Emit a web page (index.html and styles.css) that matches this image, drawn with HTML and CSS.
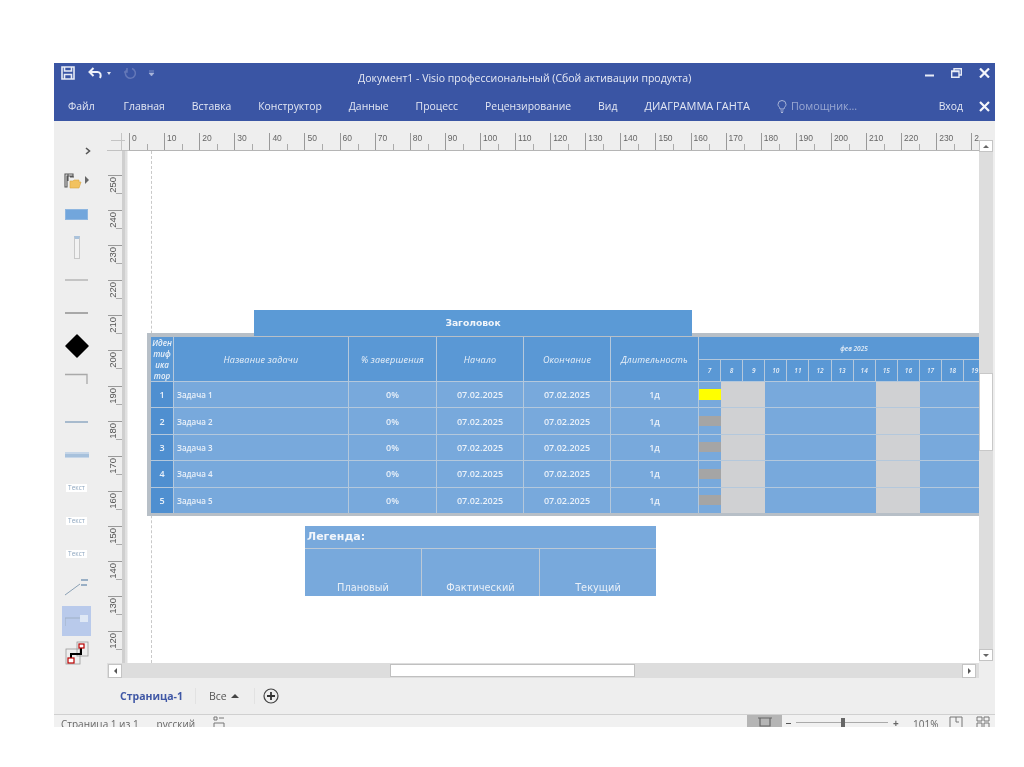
FILE: index.html
```html
<!DOCTYPE html>
<html lang="ru">
<head>
<meta charset="utf-8">
<title>Документ1 - Visio профессиональный</title>
<link rel="stylesheet" href="styles.css">
</head>
<body>
<div class="window">
  <header class="ribbon">
    <div class="titlebar">
      <div class="qat">
        <svg class="ic-save" width="14" height="14" viewBox="0 0 14 14"><path d="M1 1H13V13H1ZM3.5 1V5H10.5V1M3.5 13V8.5H10.5V13" fill="none" stroke="#e8ecf6" stroke-width="1.6"/></svg>
        <svg class="ic-undo" width="15" height="13" viewBox="0 0 15 13"><path d="M5.5 1L1.5 5L5.5 9M2 5H9.5C12.5 5 13.5 8 12 11" fill="none" stroke="#eef1f8" stroke-width="2"/></svg>
        <span class="tiny-caret"></span>
        <svg class="ic-redo" width="12" height="13" viewBox="0 0 12 13"><path d="M8 1.5A5 5 0 1 1 3 2.5M3 1V5H0" fill="none" stroke="#6478b8" stroke-width="1.5"/></svg>
        <svg class="ic-custom" width="7" height="7" viewBox="0 0 7 7"><path d="M1 1H6M1 3H6L3.5 6Z" fill="#aab6da" stroke="#aab6da" stroke-width=".6"/></svg>
      </div>
      <div class="doc-title">Документ1 - Visio профессиональный (Сбой активации продукта)</div>
      <div class="winctl">
        <svg width="9" height="9" viewBox="0 0 9 9"><path d="M0 6.5H9" stroke="#e8ecf6" stroke-width="2"/></svg>
        <svg width="11" height="10" viewBox="0 0 11 10"><path d="M.7 3H8V9.3H.7ZM3 3V.7H10.3V7H8M.7 3.5H8" fill="none" stroke="#e8ecf6" stroke-width="1.4"/></svg>
        <svg width="11" height="10" viewBox="0 0 11 10"><path d="M1 .5L10 9.5M10 .5L1 9.5" stroke="#f4f6fb" stroke-width="2.2"/></svg>
      </div>
    </div>
    <nav class="menu">
      <span>Файл</span>
      <span class="m-main">Главная</span>
      <span>Вставка</span>
      <span>Конструктор</span>
      <span>Данные</span>
      <span>Процесс</span>
      <span>Рецензирование</span>
      <span>Вид</span>
      <span class="m-gantt">ДИАГРАММА ГАНТА</span>
      <span class="helper">
        <svg width="10" height="13" viewBox="0 0 10 13"><path d="M3 9C3 7 1 6.500 1 4.500A4 4 0 0 1 9 4.500C9 6.500 7 7 7 9ZM3.500 11H6.500M4 12.500H6" fill="none" stroke="#a9b5d8" stroke-width="1"/></svg>
        Помощник...
      </span>
      <span class="login">Вход</span>
      <svg class="ribbon-x" width="11" height="11" viewBox="0 0 11 11"><path d="M1 1L10 10M10 1L1 10" stroke="#f4f6fb" stroke-width="2.2"/></svg>
    </nav>
  </header>

  <div class="workspace">
    <aside class="stencil">
      <div class="st st-chev"><svg width="6" height="8" viewBox="0 0 6 8"><path d="M1 1L4.500 4L1 7" fill="none" stroke="#555" stroke-width="1.6"/></svg></div>
      <div class="st st-folder">
        <svg width="26" height="16" viewBox="0 0 26 16"><path d="M1 1H9V3H3V14H1ZM4 1V8M6 4H10" fill="none" stroke="#555" stroke-width="1.1"/><path d="M6 15V8H9L10 7H15V9H17L15 15Z" fill="#f2c25f" stroke="#d9a441" stroke-width=".6"/><path d="M21 3L25 7L21 11Z" fill="#666"/></svg>
      </div>
      <div class="st"><span class="sh-rect"></span></div>
      <div class="st"><span class="sh-slim"></span></div>
      <div class="st"><span class="sh-line sh-line-light"></span></div>
      <div class="st"><span class="sh-line sh-line-dark"></span></div>
      <div class="st"><svg width="24" height="24" viewBox="0 0 24 24"><path d="M12 1L23 12L12 23L1 12Z" fill="#000" stroke="#000" stroke-linejoin="round" stroke-width="1.500"/></svg></div>
      <div class="st"><svg width="24" height="12" viewBox="0 0 24 12"><path d="M0 1.500H22V11" fill="none" stroke="#a9a9a9" stroke-width="1.300"/></svg></div>
      <div class="st st-gap"><span class="sh-line sh-line-blue"></span></div>
      <div class="st"><span class="sh-thick"></span></div>
      <div class="st"><span class="sh-text">Текст</span></div>
      <div class="st"><span class="sh-text">Текст</span></div>
      <div class="st"><span class="sh-text">Текст</span></div>
      <div class="st"><svg width="24" height="18" viewBox="0 0 24 18"><path d="M0 17L15 6" stroke="#8aa0b5" stroke-width="1"/><path d="M16 2H23M16 7H22" stroke="#7d9ab8" stroke-width="1.500"/></svg></div>
      <div class="st st-active"><svg width="24" height="12" viewBox="0 0 24 12"><path d="M0 11V3H15" fill="none" stroke="#9fb0c5" stroke-width="1"/><rect x="15" y="0" width="8" height="7" fill="#dfe8f5"/></svg></div>
      <div class="st st-conn"><svg width="24" height="24" viewBox="0 0 24 24"><rect x="1" y="8" width="14" height="15" fill="none" stroke="#999" stroke-width=".8"/><rect x="12" y="1" width="11" height="14" fill="none" stroke="#999" stroke-width=".8"/><path d="M6 18V13H16V6" fill="none" stroke="#000" stroke-width="2"/><rect x="14" y="3" width="5" height="4" fill="#fff" stroke="#b00" stroke-width="1.200"/><rect x="3" y="17" width="6" height="5" fill="#fff" stroke="#b00" stroke-width="1.200"/></svg></div>
    </aside>

    <div class="editor">
      <div class="corner"><span class="corner-v"></span><span class="corner-h"></span></div>
      <div class="hruler">
        <span>0</span><span>10</span><span>20</span><span>30</span><span>40</span><span>50</span><span>60</span><span>70</span><span>80</span><span>90</span><span>100</span><span>110</span><span>120</span><span>130</span><span>140</span><span>150</span><span>160</span><span>170</span><span>180</span><span>190</span><span>200</span><span>210</span><span>220</span><span>230</span><span>240</span>
      </div>
      <div class="vruler">
        <span class="vr-stub"></span>
        <span><b>250</b></span><span><b>240</b></span><span><b>230</b></span><span><b>220</b></span><span><b>210</b></span><span><b>200</b></span><span><b>190</b></span><span><b>180</b></span><span><b>170</b></span><span><b>160</b></span><span><b>150</b></span><span><b>140</b></span><span><b>130</b></span><span><b>120</b></span>
      </div>
      <div class="gutter"></div>
      <main class="canvas">
        <div class="guide"></div>

        <div class="gantt-title">Заголовок</div>

        <div class="gantt-frame">
          <div class="gantt">
            <div class="th th-id">Иден<br>тиф<br>ика<br>тор</div>
            <div class="th">Название задачи</div>
            <div class="th">% завершения</div>
            <div class="th">Начало</div>
            <div class="th">Окончание</div>
            <div class="th">Длительность</div>
            <div class="th-time">
              <div class="month">фев 2025</div>
              <div class="days"><span>7</span><span>8</span><span>9</span><span>10</span><span>11</span><span>12</span><span>13</span><span>14</span><span>15</span><span>16</span><span>17</span><span>18</span><span>19</span></div>
            </div>

            <div class="td td-id">1</div><div class="td td-name">Задача 1</div><div class="td">0%</div><div class="td">07.02.2025</div><div class="td">07.02.2025</div><div class="td">1д</div>
            <div class="track"><i class="slot"><u class="bar bar-now"></u></i><i class="wk"></i><i class="wk"></i><i></i><i></i><i></i><i></i><i></i><i class="wk"></i><i class="wk"></i><i></i><i></i><i></i></div>

            <div class="td td-id">2</div><div class="td td-name">Задача 2</div><div class="td">0%</div><div class="td">07.02.2025</div><div class="td">07.02.2025</div><div class="td">1д</div>
            <div class="track"><i class="slot"><u class="bar"></u></i><i class="wk"></i><i class="wk"></i><i></i><i></i><i></i><i></i><i></i><i class="wk"></i><i class="wk"></i><i></i><i></i><i></i></div>

            <div class="td td-id">3</div><div class="td td-name">Задача 3</div><div class="td">0%</div><div class="td">07.02.2025</div><div class="td">07.02.2025</div><div class="td">1д</div>
            <div class="track"><i class="slot"><u class="bar"></u></i><i class="wk"></i><i class="wk"></i><i></i><i></i><i></i><i></i><i></i><i class="wk"></i><i class="wk"></i><i></i><i></i><i></i></div>

            <div class="td td-id">4</div><div class="td td-name">Задача 4</div><div class="td">0%</div><div class="td">07.02.2025</div><div class="td">07.02.2025</div><div class="td">1д</div>
            <div class="track"><i class="slot"><u class="bar"></u></i><i class="wk"></i><i class="wk"></i><i></i><i></i><i></i><i></i><i></i><i class="wk"></i><i class="wk"></i><i></i><i></i><i></i></div>

            <div class="td td-id">5</div><div class="td td-name">Задача 5</div><div class="td">0%</div><div class="td">07.02.2025</div><div class="td">07.02.2025</div><div class="td">1д</div>
            <div class="track"><i class="slot"><u class="bar"></u></i><i class="wk"></i><i class="wk"></i><i></i><i></i><i></i><i></i><i></i><i class="wk"></i><i class="wk"></i><i></i><i></i><i></i></div>
          </div>
        </div>

        <div class="legend">
          <div class="legend-title">Легенда:</div>
          <div class="legend-cell">Плановый</div>
          <div class="legend-cell">Фактический</div>
          <div class="legend-cell">Текущий</div>
        </div>
      </main>
      <div class="vscroll">
        <button class="sb-btn"><span class="arr-up"></span></button>
        <div class="vtrack"><div class="vthumb"></div></div>
        <button class="sb-btn"><span class="arr-down"></span></button>
      </div>
      <div class="hscroll">
        <button class="sb-btn sb-h"><span class="arr-left"></span></button>
        <div class="hthumb"></div>
        <button class="sb-btn sb-h sb-right"><span class="arr-right"></span></button>
      </div>
    </div>
  </div>

  <div class="tabs">
    <span class="tab-page">Страница-1</span>
    <span class="tab-sep"></span>
    <span class="tab-all">Все <span class="arr-up arr-dark"></span></span>
    <span class="tab-sep"></span>
    <svg class="tab-add" width="16" height="16" viewBox="0 0 16 16"><circle cx="8" cy="8" r="7" fill="none" stroke="#444" stroke-width="1.200"/><path d="M8 4V12M4 8H12" stroke="#333" stroke-width="1.800"/></svg>
  </div>

  <footer class="status">
    <span class="s-page">Страница 1 из 1</span>
    <span class="s-lang">русский</span>
    <svg class="s-ic" width="12" height="12" viewBox="0 0 12 12"><path d="M1 1H4V4H1ZM6 2H11M1 7H11V12H1Z" fill="none" stroke="#777"/></svg>
    <span class="s-pressed"><svg width="14" height="10" viewBox="0 0 14 10"><path d="M0 1H14M2 1V9H12V1" fill="none" stroke="#666" stroke-width="1.200"/></svg></span>
    <span class="s-minus"></span>
    <span class="s-slider"><span class="s-thumb"></span></span>
    <span class="s-plus">+</span>
    <span class="s-zoom">101%</span>
    <svg class="s-ic2" width="14" height="12" viewBox="0 0 14 12"><path d="M1 1H13V12H1ZM7 1V6H10" fill="none" stroke="#777"/></svg>
    <svg class="s-ic3" width="14" height="12" viewBox="0 0 14 12"><path d="M1 1H6V5H1ZM8 1H13V5H8ZM1 7H6V12H1ZM8 7H13V12H8Z" fill="none" stroke="#777"/></svg>
  </footer>
</div>
</body>
</html>
```
FILE: styles.css
```css
* { box-sizing: border-box; }
html, body { margin: 0; padding: 0; background: #fff; }
body { font-family: "Open Sans", "Noto Sans", "Liberation Sans", sans-serif; height: 767px; overflow: hidden; }

.window {
  margin: 63px 0 0 54px;
  width: 941px;
  height: 664px;
  background: #eee;
  overflow: hidden;
  display: flex;
  flex-direction: column;
  filter: blur(.35px);
}

/* ribbon */
.ribbon { height: 58px; background: #3a55a4; color: #e3e7f3; flex: none; }
.titlebar { height: 30px; display: flex; align-items: flex-start; position: relative; }
.qat { display: flex; align-items: center; padding: 3px 0 0 7px; }
.ic-undo { margin-left: 13px; }
.tiny-caret { width: 0; height: 0; border: 2.500px solid transparent; border-top: 3px solid #dfe4f2; margin: 3px 0 0 4px; }
.ic-redo { margin-left: 13px; }
.ic-custom { margin-left: 12px; }
.doc-title { position: absolute; left: 304px; top: 7px; font-size: 10.500px; line-height: 16px; color: #e6e9f4; white-space: nowrap; }
.winctl { margin-left: auto; display: flex; gap: 17px; padding: 5px 5px 0 0; align-items: center; }
.menu { height: 28px; display: flex; align-items: center; gap: 27px; padding: 0 5px 2px 14px; font-size: 10.400px; line-height: 16px; white-space: nowrap; }
.m-main { margin-left: 2px; }
.m-gantt { font-size: 11px; }
.helper { color: #9aa8d2; display: flex; align-items: center; gap: 4px; font-size: 10.800px; }
.login { margin-left: auto; }
.ribbon-x { margin-left: -11px; }

/* workspace */
.workspace { height: 557px; display: flex; flex: none; }
.stencil { width: 53px; flex: none; padding: 20px 8px 0 0; display: flex; flex-direction: column; }
.st { height: 33px; display: flex; align-items: center; justify-content: center; flex: none; }
.st-chev { height: 20px; justify-content: flex-end; padding-right: 8px; margin-bottom: 3.500px; }
.st-folder { justify-content: flex-start; padding-left: 10px; }
.st-gap { margin-top: 10px; }
.st-active { margin: 2px 8px 0; height: 30px; background: #b9caeb; }
.st-conn { margin-top: 1px; }
.sh-rect { width: 23px; height: 11px; background: #72a6dc; border: 1px solid #8eb6e0; }
.sh-slim { width: 6px; height: 23px; background: #f2f2f2; border: 1px solid #c8c8c8; border-top: 3px solid #a9c2dc; }
.sh-line { width: 23px; height: 1px; }
.sh-line-light { background: #c4c4c4; height: 2px; }
.sh-line-dark { background: #a8a8a8; height: 2px; }
.sh-line-blue { background: #a7bacd; height: 2px; }
.sh-thick { width: 24px; height: 6px; background: #a7c1dc; border-top: 2px solid #c6d6e8; border-bottom: 1px solid #c6d6e8; }
.sh-text { background: #fff; color: #8ea6bf; font-size: 6.500px; line-height: 8px; padding: 0 2px; }

/* editor grid */
.editor {
  flex: 1;
  display: grid;
  grid-template-columns: 15px 7px 850px 16px;
  grid-template-rows: 12px 18px 512px 15px;
  min-width: 0;
}
.corner { grid-column: 1 / 3; grid-row: 2; position: relative; border-bottom: 1px solid #c2c2c2; }
.corner-v { position: absolute; left: 14px; top: 0; bottom: 0; width: 1px; background: #c4c4c4; }
.corner-h { position: absolute; left: 4px; right: 4px; top: 7px; height: 1px; background: #c4c4c4; }
.hruler {
  grid-column: 3; grid-row: 2;
  display: flex; overflow: hidden;
  border-bottom: 1px solid #b5b5b5;
}
.hruler span {
  flex: none; width: 35.100px; height: 18px;
  border-left: 1px solid #999;
  padding-left: 2px;
  font-size: 8.500px; line-height: 11px; color: #666;
  position: relative;
  font-family: "Liberation Sans", sans-serif;
}
.hruler span::after { content: ""; position: absolute; left: 17px; bottom: 0; width: 1px; height: 7px; background: #aaa; }

.vruler {
  grid-column: 1; grid-row: 3;
  display: flex; flex-direction: column;
  overflow: hidden;
  padding-left: 1px;
}
.vruler .vr-stub { height: 24px; border: 0; }
.vruler span {
  flex: none; height: 35.100px;
  border-top: 1px solid #999;
  position: relative;
  font-family: "Liberation Sans", sans-serif;
}
.vruler span:not(.vr-stub)::after { content: ""; position: absolute; right: 0; top: 17px; width: 6px; height: 1px; background: #aaa; }
.vruler b {
  position: absolute; left: 0; top: 1px;
  font-weight: 400; font-size: 9.500px; line-height: 10px; color: #555;
  writing-mode: vertical-rl; transform: rotate(180deg);
}
.gutter { grid-column: 2; grid-row: 3; background: linear-gradient(to right, #cfcfcf 0 3px, #e0e0e0 3px 5px, #fff 6px); }

.canvas { grid-column: 3; grid-row: 3; background: #fff; position: relative; overflow: hidden; }
.guide { position: absolute; left: 22px; top: 0; bottom: 0; border-left: 1px dashed #c9c9c9; }

.gantt-title {
  position: absolute; left: 125px; top: 159px; width: 438px; height: 26px;
  background: #5b9ad6; color: #f1f5fa;
  font: 700 9.200px/26px "DejaVu Sans", sans-serif;
  text-align: center; z-index: 1;
}
.gantt-frame {
  position: absolute; left: 18px; top: 182px; width: 832px; height: 183px;
  background: #b7bfc7; padding: 4px 0 3px 4px; overflow: hidden;
}
.gantt {
  width: 858px; height: 176px;
  display: grid;
  grid-template-columns: 22px 174px 87px 86px 86px 87px 1fr;
  grid-template-rows: 44px repeat(5, 25.400px);
  gap: 1px;
  background: #b4c8dc;
}
.th, .td, .track, .th-time { min-width: 0; }
.th {
  background: #5a98d5; color: #e9f0f8;
  display: flex; align-items: center; justify-content: center;
  font-size: 9px; font-style: italic; line-height: 11px; text-align: center; letter-spacing: .2px;
}
.th-id { font-size: 8px; line-height: 11px; background: #5a98d5; font-weight: 600; letter-spacing: 0; }
.th-time { background: #b4c8dc; display: flex; flex-direction: column; gap: 1px; }
.month { height: 22px; background: #5a98d5; color: #e9f0f8; font-size: 6.500px; font-style: italic; font-weight: 600; display: flex; align-items: center; justify-content: center; }
.days { flex: 1; display: flex; gap: 1px; }
.days span { flex: none; width: 21.100px; background: #5a98d5; color: #e9f0f8; font-size: 6.500px; font-style: italic; font-weight: 600; display: flex; align-items: center; justify-content: center; }
.td {
  background: #78a9dc; color: #eaf1f9;
  display: flex; align-items: center; justify-content: center;
  font-size: 9px; font-weight: 600;
}
.td-id { background: #4f8fd0; }
.td-name { justify-content: flex-start; padding-left: 3px; font-size: 8px; }
.track { display: flex; background: #78a9dc; }
.track i { flex: none; width: 22.100px; display: flex; align-items: center; }
.track i.wk { background: #d0d1d3; }
.bar { display: block; width: 100%; height: 10px; background: #a5a5a5; text-decoration: none; }
.bar-now { background: #ffff00; height: 11px; }

.legend {
  position: absolute; left: 176px; top: 375px; width: 351px; height: 70px;
  background: #bcc9d6; display: grid;
  grid-template-columns: 116px 117px 116px;
  grid-template-rows: 22px 1fr;
  gap: 1px; border: 0;
  font-family: "DejaVu Sans", sans-serif;
}
.legend-title { grid-column: 1 / 4; background: #78a9dc; color: #f2f6fb; font-weight: 700; font-size: 11px; line-height: 22px; padding-left: 2px; }
.legend-cell { background: #78a9dc; color: #e8eff7; font-size: 9.800px; display: flex; align-items: flex-end; justify-content: center; padding-bottom: 2px; line-height: 12px; }

/* scrollbars */
.vscroll { grid-column: 4; grid-row: 1 / 4; padding-top: 19px; width: 14px; display: flex; flex-direction: column; }
.vtrack { height: 497px; background: #ddd; flex: none; padding-top: 221px; }
.vthumb { height: 78px; background: #fff; border: 1px solid #c8c8c8; }
.sb-btn { width: 14px; height: 12px; padding: 0; border: 1px solid #c4c4c4; background: #fff; display: flex; align-items: center; justify-content: center; flex: none; }
.hscroll { grid-column: 1 / 4; grid-row: 4; background: #ddd; display: flex; align-items: center; position: relative; }
.sb-h { height: 14px; margin-left: 1px; }
.hthumb { margin-left: 268px; width: 245px; height: 13px; background: #fff; border: 1px solid #c0c0c0; }
.sb-right { margin-left: 327px; }
.arr-up { width: 0; height: 0; border: 3.500px solid transparent; border-top: 0; border-bottom: 3.500px solid #666; display: inline-block; }
.arr-down { width: 0; height: 0; border: 3.500px solid transparent; border-bottom: 0; border-top: 3.500px solid #666; }
.arr-left { width: 0; height: 0; border: 3.500px solid transparent; border-left: 0; border-right: 3.500px solid #555; }
.arr-right { width: 0; height: 0; border: 3.500px solid transparent; border-right: 0; border-left: 3.500px solid #555; }

/* tabs */
.tabs { height: 36px; flex: none; display: flex; align-items: center; font-size: 10.500px; padding-left: 66px; }
.tab-page { color: #3f57a5; font-weight: 700; width: 75px; }
.tab-sep { width: 1px; height: 16px; background: #e2e2e2; }
.tab-all { color: #555; margin-left: 13px; width: 45px; }
.arr-dark { border-bottom-color: #444; margin: 0 0 2px 2px; vertical-align: middle; border-width: 4.500px; border-top: 0; }
.tab-add { margin-left: 8px; }

/* status */
.status { flex: none; height: 13px; border-top: 1px solid #d0d0d0; background: #f1f1f1; display: flex; align-items: flex-start; font-size: 10px; line-height: 14px; color: #666; position: relative; overflow: hidden; white-space: nowrap; }
.s-page { margin: 2px 0 0 7px; }
.s-lang { margin: 2px 0 0 18px; }
.s-ic { margin: 1px 0 0 18px; }
.s-pressed { margin-left: auto; position: absolute; left: 693px; top: 0; width: 35px; height: 13px; background: #b5b5b5; display: flex; justify-content: center; padding-top: 2px; }
.s-minus { position: absolute; left: 732px; top: 8px; width: 5px; height: 1px; background: #555; }
.s-slider { position: absolute; left: 742px; top: 7px; width: 92px; height: 1px; background: #aaa; }
.s-thumb { position: absolute; left: 45px; top: -4px; width: 4px; height: 9px; background: #666; }
.s-plus { position: absolute; left: 839px; top: 1px; font-weight: 700; }
.s-zoom { position: absolute; left: 859px; top: 2px; }
.s-ic2 { position: absolute; left: 895px; top: 1px; }
.s-ic3 { position: absolute; left: 922px; top: 1px; }
```
